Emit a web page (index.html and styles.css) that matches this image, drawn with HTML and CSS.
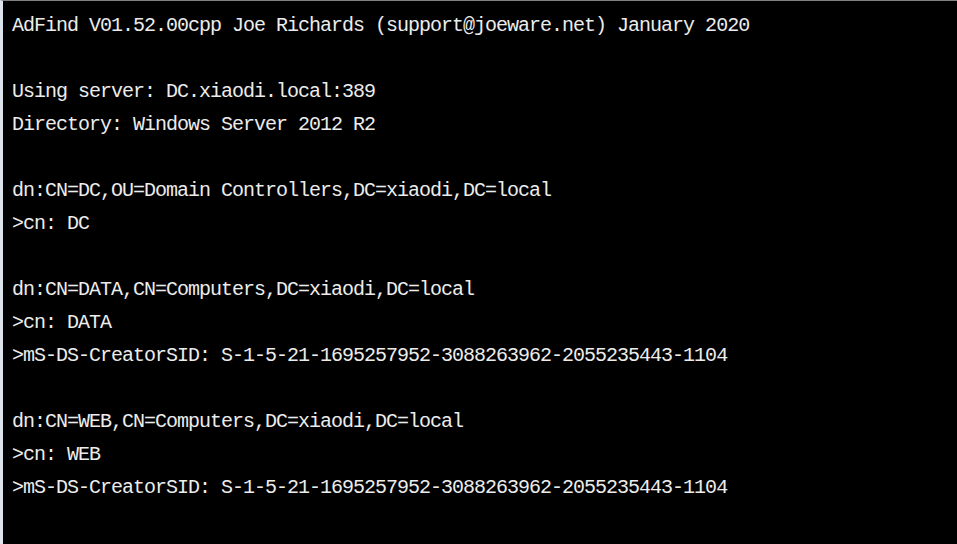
FILE: index.html
```html
<!DOCTYPE html>
<html lang="en">
<head>
<meta charset="utf-8">
<title>AdFind</title>
<link rel="stylesheet" href="styles.css">
</head>
<body>
<div class="console">
<pre class="output">AdFind V01.52.00cpp Joe Richards (support@joeware.net) January 2020

Using server: DC.xiaodi.local:389
Directory: Windows Server 2012 R2

dn:CN=DC,OU=Domain Controllers,DC=xiaodi,DC=local
&gt;cn: DC

dn:CN=DATA,CN=Computers,DC=xiaodi,DC=local
&gt;cn: DATA
&gt;mS-DS-CreatorSID: S-1-5-21-1695257952-3088263962-2055235443-1104

dn:CN=WEB,CN=Computers,DC=xiaodi,DC=local
&gt;cn: WEB
&gt;mS-DS-CreatorSID: S-1-5-21-1695257952-3088263962-2055235443-1104</pre>
</div>
</body>
</html>
```

FILE: styles.css
```css
html, body {
  margin: 0;
  padding: 0;
  background: #000;
}
.console {
  width: 957px;
  height: 544px;
  box-sizing: border-box;
  background: #000;
  border-top: 1px solid #808080;
  border-left: 3px solid #dde4eb;
  padding: 8px 0 0 9px;
  overflow: hidden;
}
.output {
  margin: 0;
  font-family: "Liberation Mono", monospace;
  font-size: 20px;
  letter-spacing: -1px;
  line-height: 33px;
  color: #ececec;
  white-space: pre;
}
```
